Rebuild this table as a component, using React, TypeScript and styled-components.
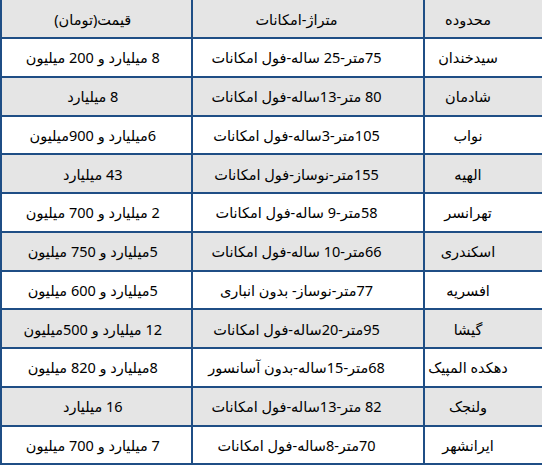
import React from "react";
import styled, { createGlobalStyle } from "styled-components";

const Global = createGlobalStyle`
  html, body { margin: 0; padding: 0; background: #ffffff; overflow: hidden; }
  body { font-family: "Noto Sans", "DejaVu Sans", sans-serif; }
`;

const Table = styled.div`
  direction: rtl;
  width: 542px;
  box-sizing: border-box;
  display: grid;
  grid-template-columns: 1fr 230px 189.5px;
  grid-template-rows: 37px repeat(11, 36.75px);
  gap: 2px;
  padding: 0 0 2px 1.5px;
  background: #1f4e85;
`;

const Cell = styled.div<{ $shade: boolean; $pr: number }>`
  display: flex;
  align-items: center;
  justify-content: center;
  padding-right: ${(p) => p.$pr}px;
  background: ${(p) => (p.$shade ? "#e5e5e5" : "#ffffff")};
  color: #000000;
  font-size: 14.5px;
  white-space: nowrap;
  overflow: hidden;
`;

const pads = [31, 23, 7];

const header = ["محدوده", "متراژ-امکانات", "قیمت(تومان)"];

const rows: string[][] = [
  ["سیدخندان", "75متر-25 ساله-فول امکانات", "8 میلیارد و 200 میلیون"],
  ["شادمان", "80 متر-13ساله-فول امکانات", "8 میلیارد"],
  ["نواب", "105متر-3ساله-فول امکانات", "6میلیارد و 900میلیون"],
  ["الهیه", "155متر-نوساز-فول امکانات", "43 میلیارد"],
  ["تهرانسر", "58متر-9 ساله-فول امکانات", "2 میلیارد و 700 میلیون"],
  ["اسکندری", "66متر-10 ساله-فول امکانات", "5میلیارد و 750 میلیون"],
  ["افسریه", "77متر-نوساز- بدون انباری", "5میلیارد و 600 میلیون"],
  ["گیشا", "95متر-20ساله-فول امکانات", "12 میلیارد و 500میلیون"],
  ["دهکده المپیک", "68متر-15ساله-بدون آسانسور", "8میلیارد و 820 میلیون"],
  ["ولنجک", "82 متر-13ساله-فول امکانات", "16 میلیارد"],
  ["ایرانشهر", "70متر-8ساله-فول امکانات", "7 میلیارد و 700 میلیون"],
];

export default function App() {
  return (
    <>
      <Global />
      <Table>
        {header.map((h, i) => (
          <Cell key={"h" + i} $shade $pr={pads[i]}>
            {h}
          </Cell>
        ))}
        {rows.map((r, ri) =>
          r.map((c, ci) => (
            <Cell key={ri + "-" + ci} $shade={ri % 2 === 1} $pr={pads[ci]}>
              {c}
            </Cell>
          ))
        )}
      </Table>
    </>
  );
}
